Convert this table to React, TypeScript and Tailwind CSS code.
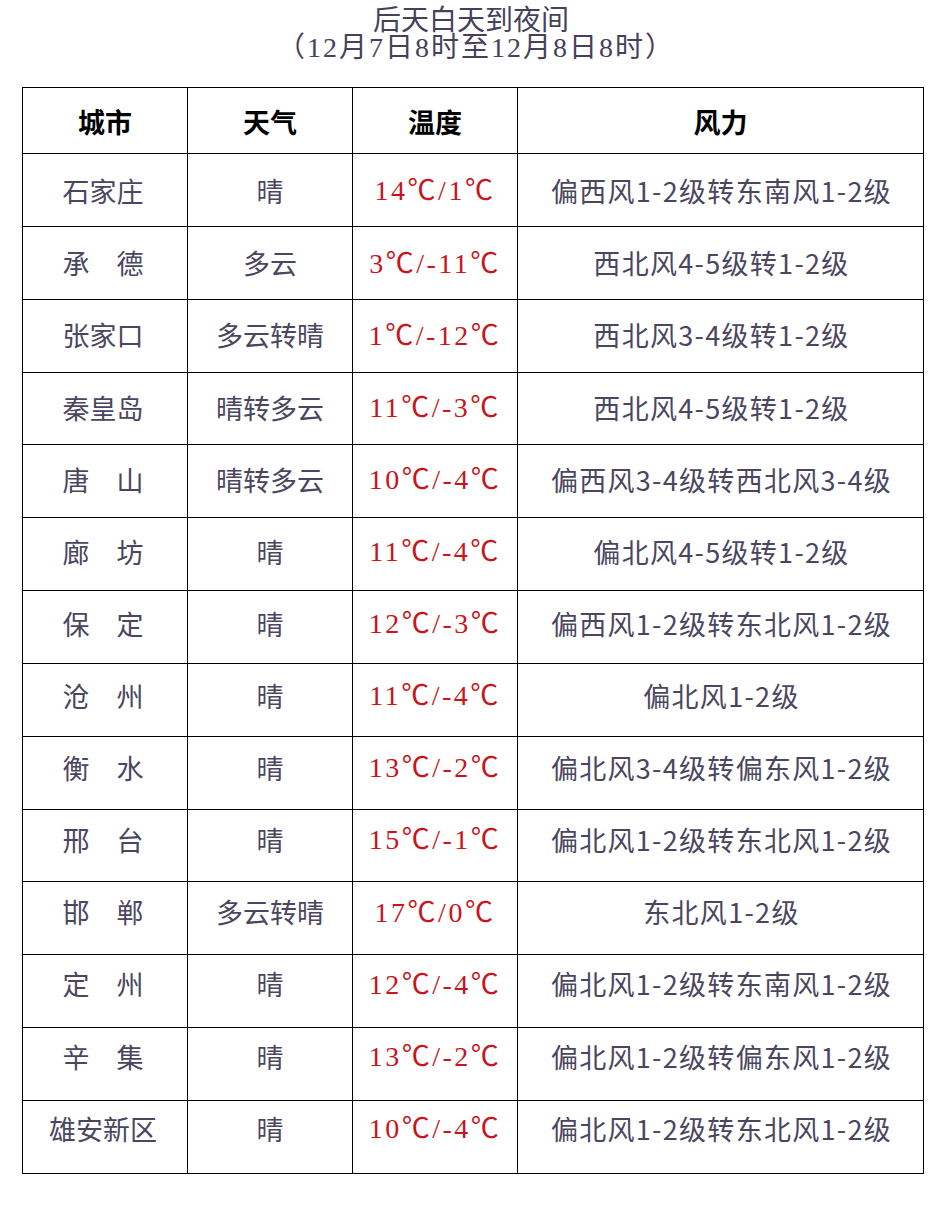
import React from 'react';

type Row = {
  city: string;
  weather: string;
  temp: string;
  wind: string;
};

const rows: Row[] = [
  { city: '石家庄', weather: '晴', temp: '14℃/1℃', wind: '偏西风1-2级转东南风1-2级' },
  { city: '承\u3000德', weather: '多云', temp: '3℃/-11℃', wind: '西北风4-5级转1-2级' },
  { city: '张家口', weather: '多云转晴', temp: '1℃/-12℃', wind: '西北风3-4级转1-2级' },
  { city: '秦皇岛', weather: '晴转多云', temp: '11℃/-3℃', wind: '西北风4-5级转1-2级' },
  { city: '唐\u3000山', weather: '晴转多云', temp: '10℃/-4℃', wind: '偏西风3-4级转西北风3-4级' },
  { city: '廊\u3000坊', weather: '晴', temp: '11℃/-4℃', wind: '偏北风4-5级转1-2级' },
  { city: '保\u3000定', weather: '晴', temp: '12℃/-3℃', wind: '偏西风1-2级转东北风1-2级' },
  { city: '沧\u3000州', weather: '晴', temp: '11℃/-4℃', wind: '偏北风1-2级' },
  { city: '衡\u3000水', weather: '晴', temp: '13℃/-2℃', wind: '偏北风3-4级转偏东风1-2级' },
  { city: '邢\u3000台', weather: '晴', temp: '15℃/-1℃', wind: '偏北风1-2级转东北风1-2级' },
  { city: '邯\u3000郸', weather: '多云转晴', temp: '17℃/0℃', wind: '东北风1-2级' },
  { city: '定\u3000州', weather: '晴', temp: '12℃/-4℃', wind: '偏北风1-2级转东南风1-2级' },
  { city: '辛\u3000集', weather: '晴', temp: '13℃/-2℃', wind: '偏北风1-2级转偏东风1-2级' },
  { city: '雄安新区', weather: '晴', temp: '10℃/-4℃', wind: '偏北风1-2级转东北风1-2级' },
];

const serif = "font-['Liberation_Serif','Noto_Sans_CJK_SC',serif]";
const sans = "font-['Noto_Sans_CJK_SC',sans-serif]";

// text drifts slightly upward row by row in the source image
const offset = (i: number): React.CSSProperties => {
  const shift = 1.5 - i * 0.73;
  return shift >= 0 ? { paddingTop: shift * 2 } : { paddingBottom: -shift * 2 };
};

const App: React.FC = () => {
  return (
    <div className={`w-[942px] h-[1218px] bg-white ${serif}`}>
      <div className="pt-[3px] text-center text-[28px] leading-[30px] text-[#45415a]">
        <div className={sans}>后天白天到夜间</div>
        <div className="pl-[10px] tracking-[2px]">（12月7日8时至12月8日8时）</div>
      </div>

      <table className="ml-[22px] mt-[24px] w-[901px] table-fixed border-collapse text-[27px]">
        <colgroup>
          <col className="w-[165px]" />
          <col className="w-[165px]" />
          <col className="w-[165px]" />
          <col className="w-[406px]" />
        </colgroup>
        <thead>
          <tr className={`h-[66px] text-black ${sans}`}>
            <th className="border border-black pt-[4px] font-bold">城市</th>
            <th className="border border-black pt-[4px] font-bold">天气</th>
            <th className="border border-black pt-[4px] font-bold">温度</th>
            <th className="border border-black pt-[4px] font-bold">风力</th>
          </tr>
        </thead>
        <tbody>
          {rows.map((r, i) => (
            <tr key={r.city} className="h-[72.85px] text-[#4a4660]">
              <td className={`border border-black pr-[4px] text-center ${sans}`} style={offset(i)}>
                {r.city}
              </td>
              <td className={`border border-black text-center ${sans}`} style={offset(i)}>
                {r.weather}
              </td>
              <td
                className="border border-black text-center text-[28px] tracking-[2.5px] text-[#c8141c]"
                style={offset(i)}
              >
                {r.temp}
              </td>
              <td className={`border border-black pl-[2px] text-center tracking-[1.3px] ${sans}`} style={offset(i)}>
                {r.wind}
              </td>
            </tr>
          ))}
        </tbody>
      </table>
    </div>
  );
};

export default App;
